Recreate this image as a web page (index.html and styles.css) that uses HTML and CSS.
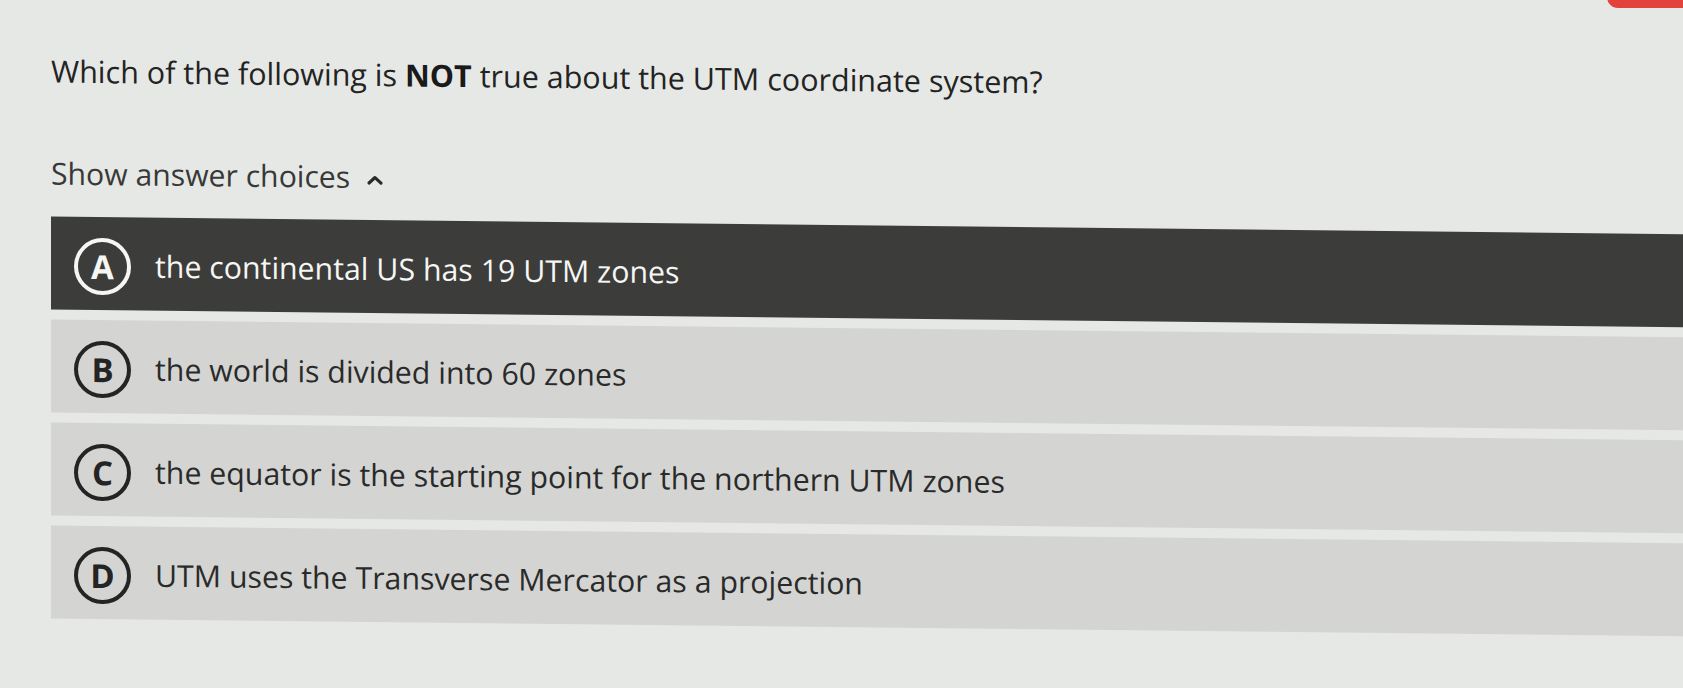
FILE: index.html
```html
<!DOCTYPE html>
<html lang="en">
<head>
    <meta charset="UTF-8">
    <meta name="viewport" content="width=device-width, initial-scale=1.0">
    <title>UTM Quiz</title>
    <link rel="stylesheet" href="styles.css">
</head>
<body>
    <div class="corner-badge"></div>
    <main class="quiz">
        <p class="question">Which of the following is <b>NOT</b> true about the UTM coordinate system?</p>
        <button class="toggle" type="button">
            Show answer choices
            <svg class="chevron" width="18" height="10" viewBox="0 0 18 10"><path d="M3 8 L9 2.5 L15 8" fill="none" stroke="currentColor" stroke-width="3.2" stroke-linecap="round" stroke-linejoin="round"/></svg>
        </button>
        <ol class="choices">
            <li class="choice selected"><span class="letter">A</span><span class="text">the continental US has 19 UTM zones</span></li>
            <li class="choice"><span class="letter">B</span><span class="text">the world is divided into 60 zones</span></li>
            <li class="choice"><span class="letter">C</span><span class="text">the equator is the starting point for the northern UTM zones</span></li>
            <li class="choice"><span class="letter">D</span><span class="text">UTM uses the Transverse Mercator as a projection</span></li>
        </ol>
    </main>
</body>
</html>
```

FILE: styles.css
```css
html, body {
    height: 100%;
}
body {
    margin: 0;
    overflow: hidden;
    font-family: 'Open Sans', 'Noto Sans', sans-serif;
    background: #e6e8e6;
    color: #282828;
}
.corner-badge {
    position: absolute;
    top: -14px;
    right: -20px;
    width: 96px;
    height: 22px;
    border-radius: 11px;
    background: #e2443d;
}
.quiz {
    padding: 50px 0 0 51px;
    margin-right: -40px;
    transform: skewY(0.62deg);
    transform-origin: 0 0;
}
.question {
    margin: 0;
    font-size: 30.5px;
    line-height: 40px;
    color: #232323;
}
.question b {
    font-weight: 700;
    color: #1a1a1a;
}
.toggle {
    display: flex;
    align-items: center;
    gap: 16px;
    margin-top: 63px;
    padding: 0;
    border: none;
    background: none;
    font-family: inherit;
    font-size: 30.2px;
    line-height: 40px;
    color: #383838;
}
.chevron {
    margin-top: 6px;
    color: #2a2a2a;
}
.choices {
    list-style: none;
    margin: 23px 0 0 0;
    padding: 0;
    display: flex;
    flex-direction: column;
    gap: 10px;
}
.choice {
    display: flex;
    align-items: center;
    gap: 24px;
    box-sizing: border-box;
    height: 93px;
    padding: 6px 0 0 23px;
    background: #d4d5d3;
    color: #2a2a2a;
    font-size: 30.3px;
}
.choice.selected {
    background: #3c3c3a;
    color: #f6f6f4;
}
.letter {
    display: flex;
    align-items: center;
    justify-content: center;
    box-sizing: border-box;
    width: 57px;
    height: 57px;
    border: 4px solid currentColor;
    border-radius: 50%;
    font-size: 33px;
    font-weight: 700;
    line-height: 1;
}
.choice:not(.selected) .letter {
    color: #242424;
}
.text {
    line-height: 40px;
    padding-bottom: 2px;
}
```
